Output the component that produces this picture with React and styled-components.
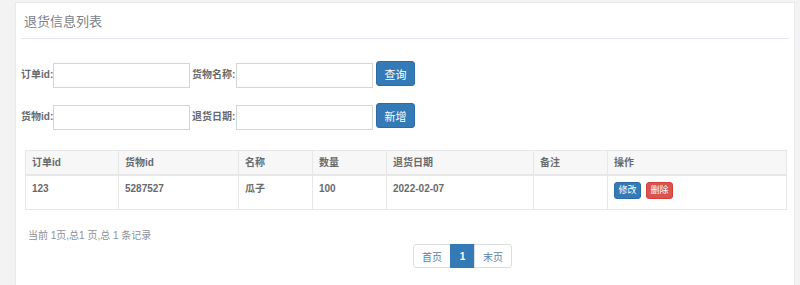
import React from 'react';
import styled, { createGlobalStyle } from 'styled-components';

const Global = createGlobalStyle`
  body {
    margin: 0;
    background: #f3f3f4;
    font-family: 'Liberation Sans', 'Noto Sans CJK SC', sans-serif;
    color: #676a6c;
  }
`

const Page = styled.div`
  height: 285px;
  overflow: hidden;
  padding: 2px 5px 0 15px;
`

const Panel = styled.div`
  background: #ffffff;
  border: 1px solid #e7eaec;
  padding: 0 5px;
  min-height: 320px;
`

const TitleBar = styled.div`
  padding: 9px 3px 6px;
  border-bottom: 1px solid #e3e8ee;
`

const Title = styled.h5`
  margin: 0;
  font-size: 13px;
  line-height: 20px;
  font-weight: 400;
  color: #7b8189;
`

const Form = styled.div`
  padding-top: 22px;
  display: flex;
  flex-direction: column;
  gap: 17px;
`

const Row = styled.div`
  display: flex;
  align-items: flex-start;
  height: 25px;
`

const Label = styled.label`
  width: ${(p) => p.w}px;
  padding-left: ${(p) => p.pl || 0}px;
  box-sizing: border-box;
  font-size: 10px;
  font-weight: 700;
  line-height: 27px;
  color: #676a6c;
  white-space: nowrap;
`

const Input = styled.input`
  width: 137px;
  height: 25px;
  margin-top: 2px;
  box-sizing: border-box;
  border: 1px solid #d5d5d5;
  outline: none;
  padding: 0 6px;
`

const Button = styled.button`
  margin-left: 3px;
  width: 39px;
  height: 25px;
  background: #337ab7;
  border: 1px solid #2e6da4;
  border-radius: 3px;
  color: #ffffff;
  font-family: inherit;
  font-size: 11px;
  padding: 0;
`

const Table = styled.table`
  margin: 22px 4px 0;
  width: 761px;
  border-collapse: collapse;
  table-layout: fixed;
  font-size: 10px;
  font-weight: 700;
  color: #676a6c;
`

const Th = styled.th`
  text-align: left;
  background: #f7f7f7;
  border: 1px solid #e7e7e7;
  border-bottom: 2px solid #e7e7e7;
  padding: 5px 6px 4px;
  line-height: 14px;
`

const Td = styled.td`
  border: 1px solid #e7e7e7;
  padding: 6px 6px 10px;
  line-height: 14px;
  vertical-align: top;
`

const SmallBtn = styled.button`
  width: 27px;
  height: 17px;
  margin-right: 5px;
  padding: 0;
  border-radius: 3px;
  border: 1px solid ${(p) => (p.danger ? '#d43f3a' : '#2e6da4')};
  background: ${(p) => (p.danger ? '#d9534f' : '#337ab7')};
  color: #ffffff;
  font-family: inherit;
  font-size: 9px;
  line-height: 15px;
`

const Info = styled.div`
  margin-top: 19px;
  padding-left: 7px;
  font-size: 10px;
  line-height: 14px;
  color: #8d9197;
`

const Pager = styled.div`
  display: flex;
  margin: 1px 0 0 392px;
`

const PageItem = styled.span`
  width: ${(p) => p.w}px;
  height: 24px;
  box-sizing: border-box;
  display: flex;
  align-items: center;
  justify-content: center;
  font-size: 10px;
  border: 1px solid ${(p) => (p.active ? '#337ab7' : '#dddddd')};
  margin-left: -1px;
  background: ${(p) => (p.active ? '#337ab7' : '#ffffff')};
  color: ${(p) => (p.active ? '#ffffff' : '#5b7fa6')};
  font-weight: ${(p) => (p.active ? 700 : 400)};
  &:first-child { border-radius: 3px 0 0 3px; margin-left: 0; }
  &:last-child { border-radius: 0 3px 3px 0; }
`

const cols = [93, 120, 74, 74, 147, 74, 179];
const headers = ['订单id', '货物id', '名称', '数量', '退货日期', '备注', '操作'];
const rows = [{ id: '123', goods: '5287527', name: '瓜子', num: '100', date: '2022-02-07', note: '' }];

export default function App() {
  return (
    <Page>
      <Global />
      <Panel>
        <TitleBar>
          <Title>退货信息列表</Title>
        </TitleBar>
        <Form>
          <Row>
            <Label w={32}>订单id:</Label>
            <Input />
            <Label w={46} pl={2}>货物名称:</Label>
            <Input />
            <Button>查询</Button>
          </Row>
          <Row>
            <Label w={32}>货物id:</Label>
            <Input />
            <Label w={46} pl={2}>退货日期:</Label>
            <Input />
            <Button>新增</Button>
          </Row>
        </Form>
        <Table>
          <colgroup>
            {cols.map((w, i) => <col key={i} style={{ width: w }} />)}
          </colgroup>
          <thead>
            <tr>{headers.map((h) => <Th key={h}>{h}</Th>)}</tr>
          </thead>
          <tbody>
            {rows.map((r) => (
              <tr key={r.id}>
                <Td>{r.id}</Td>
                <Td>{r.goods}</Td>
                <Td>{r.name}</Td>
                <Td>{r.num}</Td>
                <Td>{r.date}</Td>
                <Td>{r.note}</Td>
                <Td>
                  <SmallBtn>修改</SmallBtn>
                  <SmallBtn danger>删除</SmallBtn>
                </Td>
              </tr>
            ))}
          </tbody>
        </Table>
        <Info>当前 1页,总1 页,总 1 条记录</Info>
        <Pager>
          <PageItem w={38}>首页</PageItem>
          <PageItem w={25} active>1</PageItem>
          <PageItem w={38}>末页</PageItem>
        </Pager>
      </Panel>
    </Page>
  );
}
